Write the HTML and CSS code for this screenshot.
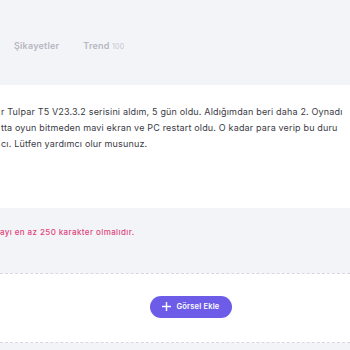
FILE: index.html
```html
<!DOCTYPE html>
<html lang="tr">
<head>
    <meta charset="UTF-8">
    <meta name="viewport" content="width=device-width, initial-scale=1.0">
    <title>Şikayet Yaz</title>
    <link rel="stylesheet" href="styles.css">
</head>
<body>
    <nav class="tabs">
        <a class="tab">Şikayetler</a>
        <a class="tab">Trend <span class="count">100</span></a>
    </nav>

    <section class="complaint">
        <p class="line">r Tulpar T5 V23.3.2 serisini aldım, 5 gün oldu. Aldığımdan beri daha 2. Oynadı</p>
        <p class="line">tta oyun bitmeden mavi ekran ve PC restart oldu. O kadar para verip bu duru</p>
        <p class="line">cı. Lütfen yardımcı olur musunuz.</p>
    </section>

    <div class="hint">ayı en az 250 karakter olmalıdır.</div>

    <div class="upload">
        <button class="add-btn">
            <svg width="9" height="9" viewBox="0 0 10 10"><path d="M5 0.5v9M0.5 5h9" stroke="#fff" stroke-width="1.6" stroke-linecap="round"/></svg>
            Görsel Ekle
        </button>
    </div>
</body>
</html>
```

FILE: styles.css
```css
body {
    margin: 0;
    background-color: #f3f4f8;
    font-family: 'Inter', 'Open Sans', sans-serif;
    overflow: hidden;
    height: 350px;
}
.tabs {
    height: 85px;
    display: flex;
    align-items: center;
    gap: 24px;
    padding: 6px 0 0 14px;
    box-sizing: border-box;
}
.tab {
    font-size: 9px;
    font-weight: 600;
    color: #b6b7c0;
    letter-spacing: 0.2px;
}
.tab .count {
    font-size: 7px;
    font-weight: 400;
    color: #c4c5cc;
}
.complaint {
    background: #fff;
    height: 123px;
    padding-top: 19px;
    box-sizing: border-box;
}
.line {
    margin: 0;
    padding-left: 1px;
    font-size: 9px;
    line-height: 16px;
    color: #3a3b44;
    white-space: nowrap;
    letter-spacing: 0.17px;
}
.hint {
    height: 65px;
    padding-top: 19px;
    box-sizing: border-box;
    font-size: 8px;
    font-weight: 500;
    color: #e0457b;
    letter-spacing: 0.4px;
}
.upload {
    background: #fff;
    height: 68px;
    border-top: 1px dashed #d6d7df;
    border-bottom: 1px dashed #d6d7df;
    display: flex;
    align-items: center;
    justify-content: center;
    padding-left: 32px;
}
.add-btn {
    display: flex;
    align-items: center;
    gap: 6px;
    height: 22px;
    padding: 0 13px 0 12px;
    border: none;
    border-radius: 11px;
    background-color: #6c5ce7;
    color: #fff;
    font-family: inherit;
    font-size: 7.5px;
    font-weight: 600;
    letter-spacing: 0.2px;
    margin-top: -3px;
}
```
